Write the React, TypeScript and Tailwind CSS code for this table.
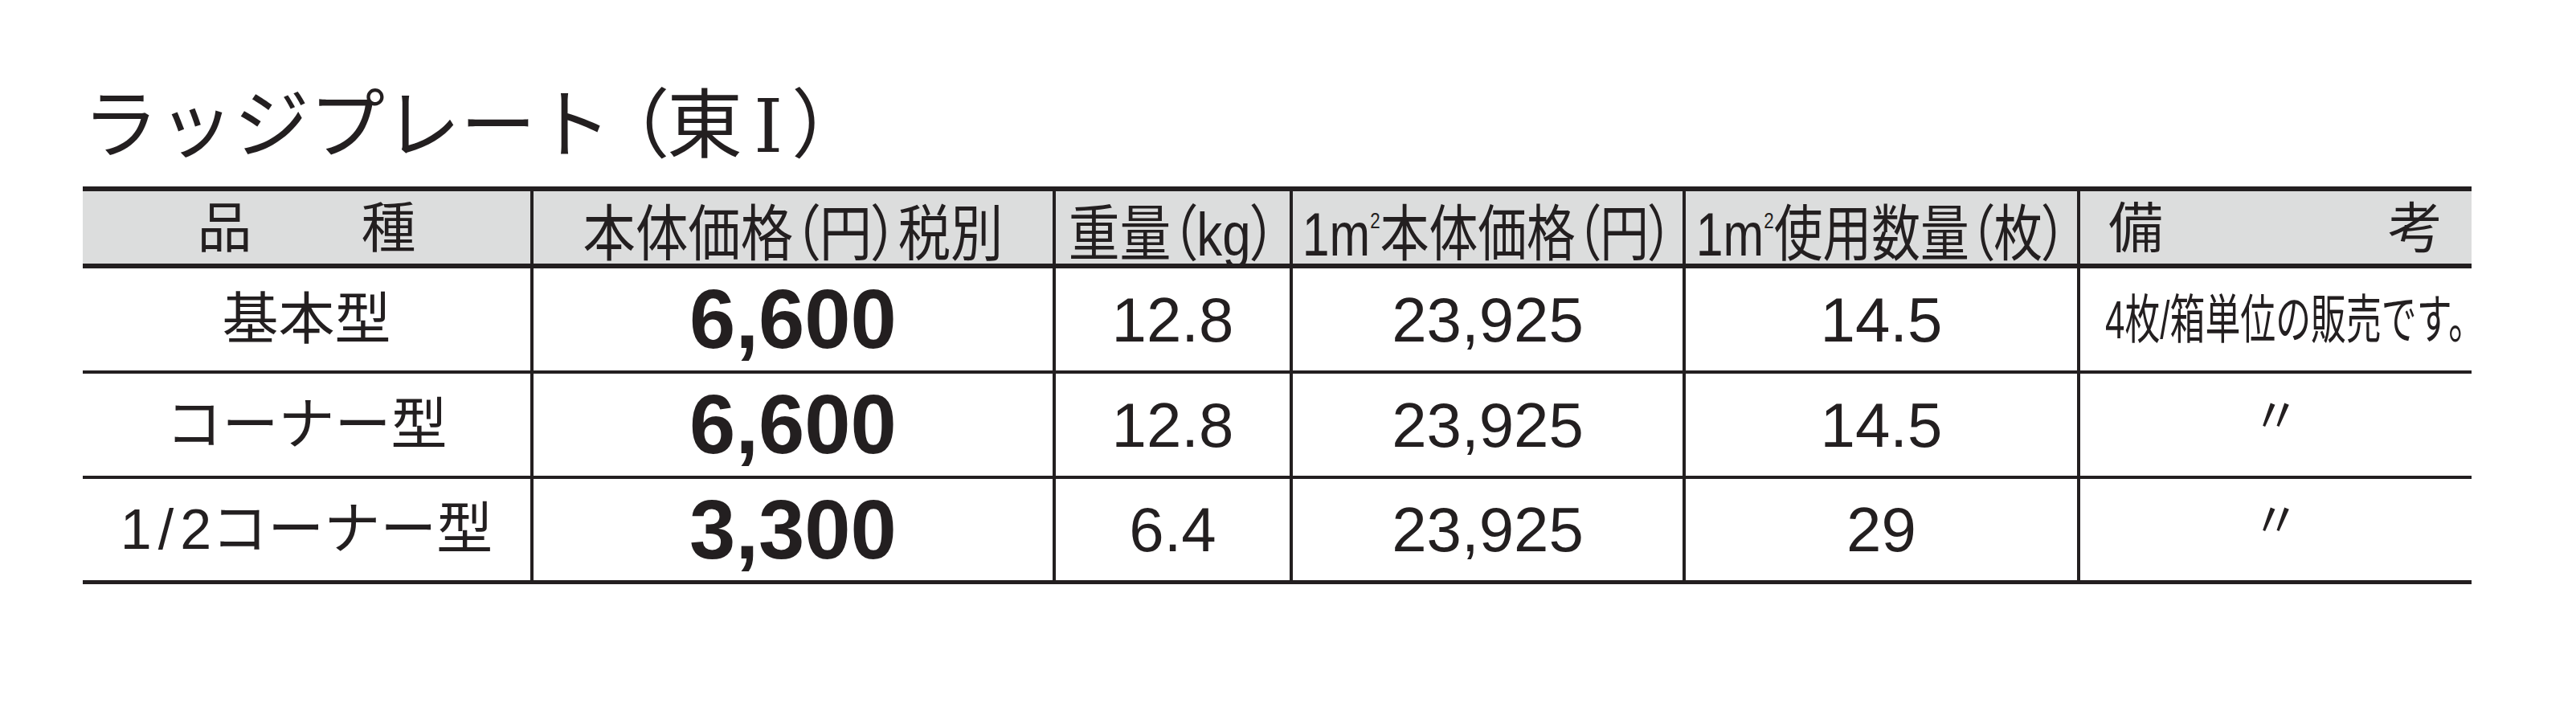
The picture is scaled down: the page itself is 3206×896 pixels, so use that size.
const sans = "font-['Liberation_Sans','Noto_Sans_CJK_JP',sans-serif]";
const jp = "font-['Noto_Sans_CJK_JP',sans-serif]";

const cols = 'grid grid-cols-[557px_650px_295px_489px_491px_491px]';

type Row = {
  name: React.ReactNode;
  price: string;
  weight: string;
  perM2: string;
  qty: string;
  note: React.ReactNode;
};

const ditto = <span className={`${jp} text-[60px] leading-none -translate-y-[16px]`}>〃</span>;

const rows: Row[] = [
  {
    name: '基本型',
    price: '6,600',
    weight: '12.8',
    perM2: '23,925',
    qty: '14.5',
    note: (
      <span className="inline-block origin-left scale-x-[0.665] whitespace-nowrap text-[66px] leading-none">
        4枚/箱単位の販売です。
      </span>
    ),
  },
  { name: 'コーナー型', price: '6,600', weight: '12.8', perM2: '23,925', qty: '14.5', note: ditto },
  {
    name: (
      <>
        <span className="tracking-[8px]">1/</span>2コーナー型
      </>
    ),
    price: '3,300',
    weight: '6.4',
    perM2: '23,925',
    qty: '29',
    note: ditto,
  },
];

// superscript square for 1㎡
const M2 = () => (
  <>
    1m<span className="align-[34px] text-[28px] leading-none">2</span>
  </>
);

const HeadScaled = ({ children, scale }: { children: React.ReactNode; scale: string }) => (
  <div className="flex h-full items-center justify-center border-l-4 border-[#231f20] pt-[16px]">
    <span className={`inline-block whitespace-nowrap text-[76px] leading-none [font-feature-settings:'palt'] ${scale}`}>
      {children}
    </span>
  </div>
);

export default function App() {
  return (
    <div className={`min-h-screen bg-white pl-[103px] pt-[100px] text-[#231f20] ${sans}`}>
      <h1 className={`${jp} h-[96px] whitespace-nowrap text-[94px] font-normal leading-[96px]`}>
        ラッジプレート
        <span className="ml-[22px] [font-feature-settings:'palt']">
          （東<span className="mx-[14px] font-['DejaVu_Serif','Liberation_Serif',serif] text-[92px]">Ⅰ</span>）
        </span>
      </h1>

      <div className="mt-[36px] w-[2973px] border-t-[6px] border-[#231f20]">
        {/* header */}
        <div className={`${cols} h-[96px] border-b-[6px] border-[#231f20] bg-[#dcdddd]`}>
          <div className="flex h-full items-center justify-center gap-[136px] text-[68px] leading-none">
            <span>品</span>
            <span>種</span>
          </div>
          <HeadScaled scale="scale-x-[0.86]">本体価格（円）税別</HeadScaled>
          <HeadScaled scale="scale-x-[0.84]">重量（kg）</HeadScaled>
          <HeadScaled scale="scale-x-[0.8]">
            <M2 />本体価格（円）
          </HeadScaled>
          <HeadScaled scale="scale-x-[0.8]">
            <M2 />使用数量（枚）
          </HeadScaled>
          <div className="flex h-full items-center justify-between border-l-4 border-[#231f20] pl-[35px] pr-[36px] text-[68px] leading-none">
            <span>備</span>
            <span>考</span>
          </div>
        </div>

        {/* body */}
        {rows.map((r, i) => (
          <div
            key={i}
            className={`${cols} h-[131px] border-[#231f20] ${i === rows.length - 1 ? 'border-b-[5px]' : 'border-b-4'}`}
          >
            <div className="flex h-full items-center justify-center whitespace-nowrap text-[70px] leading-none">
              {r.name}
            </div>
            <div className="flex h-full items-center justify-center border-l-4 border-[#231f20] text-[103px] font-bold leading-none">
              {r.price}
            </div>
            <div className="flex h-full items-center justify-center border-l-4 border-[#231f20] text-[78px] leading-none">
              {r.weight}
            </div>
            <div className="flex h-full items-center justify-center border-l-4 border-[#231f20] text-[78px] leading-none">
              {r.perM2}
            </div>
            <div className="flex h-full items-center justify-center border-l-4 border-[#231f20] text-[78px] leading-none">
              {r.qty}
            </div>
            <div
              className={`flex h-full items-center border-l-4 border-[#231f20] ${
                i === 0 ? 'justify-start pl-[31px]' : 'justify-center'
              }`}
            >
              {r.note}
            </div>
          </div>
        ))}
      </div>
    </div>
  );
}
